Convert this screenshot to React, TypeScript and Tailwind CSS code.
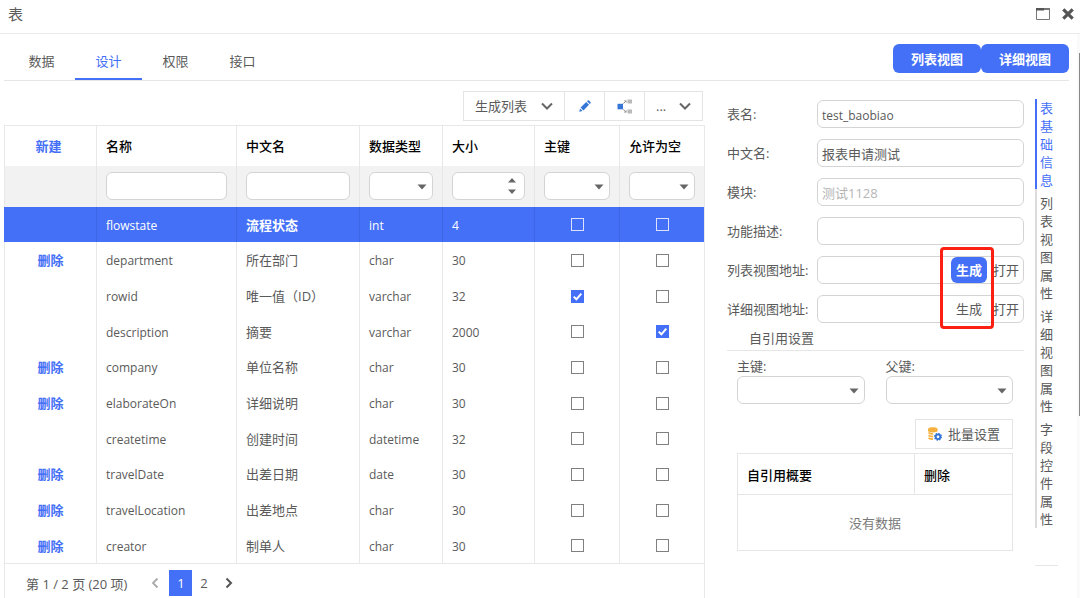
import React from "react";

const BLUE_BUTTON = "rounded-md bg-[#446ff7] font-bold text-white";

type Row = {
  name: string;
  label: string;
  type: string;
  size: string;
  removable: boolean;
  key: boolean;
  nullable: boolean;
};

const row = (
  name: string,
  label: string,
  type: string,
  size: string,
  removable: boolean,
  key = false,
  nullable = false,
): Row => ({ name, label, type, size, removable, key, nullable });

const rows: Row[] = [
  row("flowstate", "流程状态", "int", "4", false),
  row("department", "所在部门", "char", "30", true),
  row("rowid", "唯一值（ID）", "varchar", "32", false, true),
  row("description", "摘要", "varchar", "2000", false, false, true),
  row("company", "单位名称", "char", "30", true),
  row("elaborateOn", "详细说明", "char", "30", true),
  row("createtime", "创建时间", "datetime", "32", false),
  row("travelDate", "出差日期", "date", "30", true),
  row("travelLocation", "出差地点", "char", "30", true),
  row("creator", "制单人", "char", "30", true),
];

const sideTabs = ["表基础信息", "列表视图属性", "详细视图属性", "字段控件属性"];

function Caret() {
  return (
    <svg className="pointer-events-none absolute top-1/2 right-1.5 h-1.5 w-2.5 -translate-y-0.5" viewBox="0 0 10 6">
      <path d="M0.5 0.5h9L5 5.5z" fill="#666" />
    </svg>
  );
}

function Select({ label, id }: { label: string; id?: string }) {
  return (
    <div className="relative">
      <select
        id={id}
        aria-label={label}
        className="block h-7 w-full appearance-none rounded-md border border-[#d4d4d4] bg-white px-1"
      />
      <Caret />
    </div>
  );
}

function Chevron() {
  return (
    <svg className="h-2 w-3" viewBox="0 0 12 8" fill="none" stroke="#666" strokeWidth="2">
      <path d="M1 1.5 6 6.5 11 1.5" />
    </svg>
  );
}

function Check({ checked, label, selected }: { checked: boolean; label: string; selected: boolean }) {
  return (
    <span className="relative mx-auto block size-[13px]">
      <input
        type="checkbox"
        aria-label={label}
        defaultChecked={checked}
        className={
          "peer block size-[13px] appearance-none border checked:border-[#446ff7] checked:bg-[#446ff7] " +
          (selected ? "border-white/80" : "border-[#808080] bg-white")
        }
      />
      <svg
        className="pointer-events-none absolute inset-0 hidden peer-checked:block"
        viewBox="0 0 13 13"
        fill="none"
        stroke="#fff"
        strokeWidth="2"
      >
        <path d="M2.7 6.6 5.4 9.3 10.3 3.6" />
      </svg>
    </span>
  );
}

function Pencil() {
  return (
    <svg className="size-3" viewBox="0 0 12 12" fill="#3576d6">
      <path d="M0.3 11.7 1 8.4 3.6 11z" />
      <path d="M1.6 7.6 7.2 2 10 4.8 4.4 10.4z" />
      <path d="M7.9 1.3 8.8 0.5Q9.4 0 10 0.6L11.4 2Q12 2.6 11.5 3.2L10.7 4.1z" />
    </svg>
  );
}

function Branch() {
  return (
    <svg className="h-[15px] w-4" viewBox="0 0 16 15" fill="none">
      <path d="M0.500 4.800h5.500v5.500H0.500z" fill="#3576d6" />
      <path d="M10.500 0.500h4.500v4h-4.500zM10.500 10.500h4.500v4h-4.500z" fill="#b9b9b9" />
      <path d="M6.300 4.600 8 2.900M6.300 10.500 8 12.200" stroke="#777" strokeWidth="0.900" />
      <path d="M6.800 1.400h2.700v2.700zM6.800 13.600h2.700v-2.700z" fill="#8a8a8a" />
    </svg>
  );
}

function DataGear() {
  return (
    <svg className="size-[14px]" viewBox="0 0 14 14">
      <path d="M0 2.2C0 0.8 2.2 0.2 4.8 0.2s4.8 0.6 4.8 2v1.4C9.600 5 7.400 5.500 4.800 5.500S0 5 0 3.600z" fill="#f5b23e" />
      <path
        d="M0.5 5.600C1.500 6.700 3 7 5.200 7M0.500 8.300C1.500 9.300 3 9.600 5.200 9.600M0.500 10.800C1.500 11.900 3 12.200 5 12.200"
        fill="none"
        stroke="#f5b23e"
        strokeWidth="1.700"
      />
      <circle cx="10" cy="9.800" r="2.300" fill="none" stroke="#3576d6" strokeWidth="1.900" />
      <circle cx="10" cy="9.800" r="3.400" fill="none" stroke="#3576d6" strokeWidth="1.300" strokeDasharray="1.330 1.330" />
    </svg>
  );
}

function FieldRow({
  id,
  label,
  value = "",
  latin = false,
  disabled = false,
  generate,
}: {
  id: string;
  label: string;
  value?: string;
  latin?: boolean;
  disabled?: boolean;
  generate?: "primary" | "plain";
}) {
  return (
    <div className="flex h-7 items-center">
      <label htmlFor={id} className="w-[90px] shrink-0">
        {label}:
      </label>
      <div className="flex h-7 min-w-0 flex-1 items-center rounded-md border border-[#d4d4d4] bg-white pr-1">
        <input
          id={id}
          defaultValue={value}
          disabled={disabled}
          className={
            "h-full min-w-0 flex-1 bg-transparent px-1 outline-none disabled:text-[#b5b5b5] " +
            (latin ? "pt-0.5 text-xs" : "")
          }
        />
        {generate && (
          <>
            <button
              type="button"
              className={
                generate === "primary"
                  ? "h-[26px] w-9 rounded-md bg-[#446ff7] font-bold text-white"
                  : "h-[26px] w-9 rounded-md"
              }
            >
              生成
            </button>
            <button type="button" className="ml-1.5 w-[26px] whitespace-nowrap">
              打开
            </button>
          </>
        )}
      </div>
    </div>
  );
}

function ColumnsTable() {
  const head = "border-l border-[#e8e8e8] px-[9px] text-left font-medium text-black";
  const filter = "border-l border-[#e6e6e6] px-[9px] pb-0.5";
  return (
    <table className="w-full table-fixed border-separate border-spacing-0 border-y border-[#e8e8e8]">
      <colgroup>
        <col className="w-[92px]" />
        <col className="w-[140px]" />
        <col className="w-[123px]" />
        <col className="w-[83px]" />
        <col className="w-[92px]" />
        <col className="w-[85px]" />
        <col className="w-[85px]" />
      </colgroup>
      <thead>
        <tr className="h-10">
          <th className="border-l border-[#e8e8e8] pr-1 font-bold">
            <a href="#new" className="text-[#446ff7]">
              新建
            </a>
          </th>
          {["名称", "中文名", "数据类型", "大小", "主键", "允许为空"].map((h) => (
            <th key={h} className={head}>
              {h}
            </th>
          ))}
        </tr>
        <tr className="h-[41px] bg-[#f2f2f2]">
          <td className="border-l border-[#e8e8e8]" />
          <td className={filter}>
            <input aria-label="筛选名称" className="block h-7 w-full rounded-md border border-[#d4d4d4] bg-white px-1" />
          </td>
          <td className={filter}>
            <input aria-label="筛选中文名" className="block h-7 w-full rounded-md border border-[#d4d4d4] bg-white px-1" />
          </td>
          <td className={filter}>
            <Select label="筛选数据类型" />
          </td>
          <td className={filter}>
            <div className="relative">
              <input
                inputMode="numeric"
                aria-label="筛选大小"
                className="block h-7 w-full rounded-md border border-[#d4d4d4] bg-white px-1"
              />
              <svg className="pointer-events-none absolute top-1.5 right-[9px] h-4 w-2" viewBox="0 0 8 16" fill="#666">
                <path d="M0 4.500h8L4 0zM0 11.500h8L4 16z" />
              </svg>
            </div>
          </td>
          <td className={filter}>
            <Select label="筛选主键" />
          </td>
          <td className={filter}>
            <Select label="筛选允许为空" />
          </td>
        </tr>
      </thead>
      <tbody>
        {rows.map((r, i) => {
          const selected = i === 0;
          const cell = selected
            ? "border-l border-[#3d66e4] px-[9px] text-white"
            : "border-l border-[#e8e8e8] px-[9px]";
          return (
            <tr key={r.name} className={"h-9 nth-[3n+1]:h-[35px] " + (selected ? "bg-[#446ff7]" : "")}>
              <td className={"border-l text-center font-bold " + (selected ? "border-[#446ff7]" : "border-[#e8e8e8]")}>
                {r.removable && (
                  <a href="#delete" className="text-[#446ff7]">
                    删除
                  </a>
                )}
              </td>
              <td className={cell + " pt-0.5 text-xs"}>{r.name}</td>
              <td className={cell + " whitespace-nowrap " + (selected ? "font-bold" : "")}>{r.label}</td>
              <td className={cell + " pt-0.5 text-xs"}>{r.type}</td>
              <td className={cell + " pt-0.5 text-xs"}>{r.size}</td>
              <td className={cell}>
                <Check checked={r.key} label={r.name + " 主键"} selected={selected} />
              </td>
              <td className={cell}>
                <Check checked={r.nullable} label={r.name + " 允许为空"} selected={selected} />
              </td>
            </tr>
          );
        })}
      </tbody>
    </table>
  );
}

export default function App() {
  return (
    <div className="flex min-h-screen flex-col bg-white font-['Open_Sans','Noto_Sans_CJK_SC',sans-serif] text-[13px] leading-5 text-[#5a5a5a]">
      <header className="flex h-[34px] items-center justify-between border-b border-[#ebebeb] pr-1.5 pb-1.5 pl-2">
        <h1 className="text-[15px] leading-6">表</h1>
        <div className="flex items-center gap-3">
          <button type="button" aria-label="最大化">
            <svg className="h-3 w-[14px]" viewBox="0 0 14 12" fill="none">
              <path d="M0.500 0.500h13v11H0.500z" stroke="#777" />
              <path d="M0 0h8v2.500H0z" fill="#555" />
              <path d="M8 0h6v2H8z" fill="#777" />
            </svg>
          </button>
          <button type="button" aria-label="关闭">
            <svg className="size-3" viewBox="0 0 12 12" fill="none" stroke="#555" strokeWidth="3.200">
              <path d="M1.300 1.300 10.700 10.700M10.700 1.300 1.300 10.700" />
            </svg>
          </button>
        </div>
      </header>

      <div className="flex flex-1">
        <div className="flex min-w-0 flex-1 flex-col pr-2 pl-1">
          <div className="flex h-[47px] justify-between border-b border-[#e6e6e6]">
            <nav className="flex items-end pl-1">
              {["数据", "设计", "权限", "接口"].map((t) => (
                <a
                  key={t}
                  href={"#" + t}
                  className={
                    "flex h-9 w-[67px] items-center justify-center border-b-2 " +
                    (t === "设计" ? "border-[#446ff7] text-[#446ff7]" : "border-transparent")
                  }
                >
                  {t}
                </a>
              ))}
            </nav>
            <div className="flex pt-2.5">
              <button type="button" className={BLUE_BUTTON + " h-[29px] w-[88px]"}>
                列表视图
              </button>
              <button type="button" className={BLUE_BUTTON + " h-[29px] w-[88px]"}>
                详细视图
              </button>
            </div>
          </div>

          <div className="flex flex-1">
            <section className="flex min-w-0 flex-1 flex-col pt-2.5">
              <div className="mr-0.5 mb-1 flex h-[30px] self-end divide-x divide-[#e4e4e4] border border-[#e4e4e4]">
                <button type="button" className="flex w-[101px] items-center justify-between px-[11px]">
                  生成列表 <Chevron />
                </button>
                <button type="button" aria-label="编辑" className="flex w-10 items-center justify-center">
                  <Pencil />
                </button>
                <button type="button" aria-label="关联" className="flex w-10 items-center justify-center">
                  <Branch />
                </button>
                <button type="button" className="flex w-[57px] items-center justify-between px-[11px]">
                  ... <Chevron />
                </button>
              </div>
              <div className="flex flex-1 flex-col border-r border-[#e8e8e8]">
                <ColumnsTable />
                <div className="flex flex-1 items-start border-l border-[#e8e8e8] pt-1.5 pl-[21px]">
                  <span className="pt-1 whitespace-nowrap">第 1 / 2 页 (20 项)</span>
                  <nav aria-label="分页" className="ml-6 flex items-center">
                    <button type="button" aria-label="上一页">
                      <svg className="h-3 w-2" viewBox="0 0 8 12" fill="none" stroke="#aaa" strokeWidth="1.800">
                        <path d="M6.500 1.500 2 6l4.500 4.500" />
                      </svg>
                    </button>
                    <button type="button" className="ml-2.5 h-[26px] w-[23px] bg-[#446ff7] text-white">
                      1
                    </button>
                    <button type="button" className="h-[26px] w-[23px]">
                      2
                    </button>
                    <button type="button" aria-label="下一页" className="ml-2.5">
                      <svg className="h-3 w-2" viewBox="0 0 8 12" fill="none" stroke="#555" strokeWidth="2">
                        <path d="M1.500 1.500 6 6l-4.500 4.500" />
                      </svg>
                    </button>
                  </nav>
                </div>
              </div>
            </section>

            <section className="flex w-[364px] shrink-0 gap-[11px] pt-[18px] pr-[11px] pl-[22px]">
              <div className="min-w-0 flex-1">
                <div className="relative flex flex-col gap-[11px] pt-px">
                  <FieldRow id="f-name" label="表名" value="test_baobiao" latin />
                  <FieldRow id="f-cn" label="中文名" value="报表申请测试" />
                  <FieldRow id="f-module" label="模块" value="测试1128" disabled />
                  <FieldRow id="f-desc" label="功能描述" />
                  <FieldRow id="f-list" label="列表视图地址" generate="primary" />
                  <FieldRow id="f-detail" label="详细视图地址" generate="plain" />
                  <div className="pointer-events-none absolute right-[30px] -bottom-1.5 h-[82px] w-[54px] rounded-sm border-[3px] border-[#fb2012]" />
                </div>

                <h2 className="border-b border-[#e6e6e6] pt-[5px] pb-0.5 pl-[22px]">自引用设置</h2>

                <div className="pr-[11px] pl-[10px]">
                  <div className="grid grid-cols-2 gap-[21px] pt-[5px]">
                    <div>
                      <label htmlFor="f-pk">主键:</label>
                      <Select id="f-pk" label="主键" />
                    </div>
                    <div>
                      <label htmlFor="f-parent">父键:</label>
                      <Select id="f-parent" label="父键" />
                    </div>
                  </div>
                  <div className="flex justify-end pt-[15px] pb-1">
                    <button
                      type="button"
                      className="flex h-[30px] w-[98px] items-center justify-center gap-1.5 border border-[#e4e4e4]"
                    >
                      <DataGear />
                      批量设置
                    </button>
                  </div>
                  <table className="w-full table-fixed border-separate border-spacing-0 border border-[#e6e6e6]">
                    <thead>
                      <tr className="h-[41px]">
                        <th className="border-b border-[#e6e6e6] px-[9px] pt-0.5 text-left font-medium text-black">自引用概要</th>
                        <th className="w-[98px] border-b border-l border-[#e6e6e6] px-[9px] pt-0.5 text-left font-medium text-black">
                          删除
                        </th>
                      </tr>
                    </thead>
                    <tbody>
                      <tr className="h-[55px]">
                        <td colSpan={2} className="text-center text-[#7a7a7a]">
                          没有数据
                        </td>
                      </tr>
                    </tbody>
                  </table>
                </div>
              </div>

              <div className="w-[23px] shrink-0">
                <nav className="flex flex-col gap-[5px] border-l-2 border-[#dcdcdc]">
                  {sideTabs.map((t, i) => (
                    <a
                      key={t}
                      href={"#" + t}
                      className={
                        "-ml-0.5 flex w-5 flex-col border-l-2 pl-[3px] leading-[18px] " +
                        (i === 0 ? "border-[#446ff7] text-[#446ff7]" : "border-transparent")
                      }
                    >
                      {[...t].map((c, n) => (
                        <span key={n}>{c}</span>
                      ))}
                    </a>
                  ))}
                </nav>
                <hr className="mt-[37px] border-[#e6e6e6]" />
              </div>
            </section>
          </div>
        </div>

        <div className="flex w-[3px] shrink-0 flex-col items-end bg-[#fafafa] pt-[19px]" aria-hidden="true">
          <div className="h-2/3 w-px bg-[#888]" />
        </div>
      </div>
    </div>
  );
}
